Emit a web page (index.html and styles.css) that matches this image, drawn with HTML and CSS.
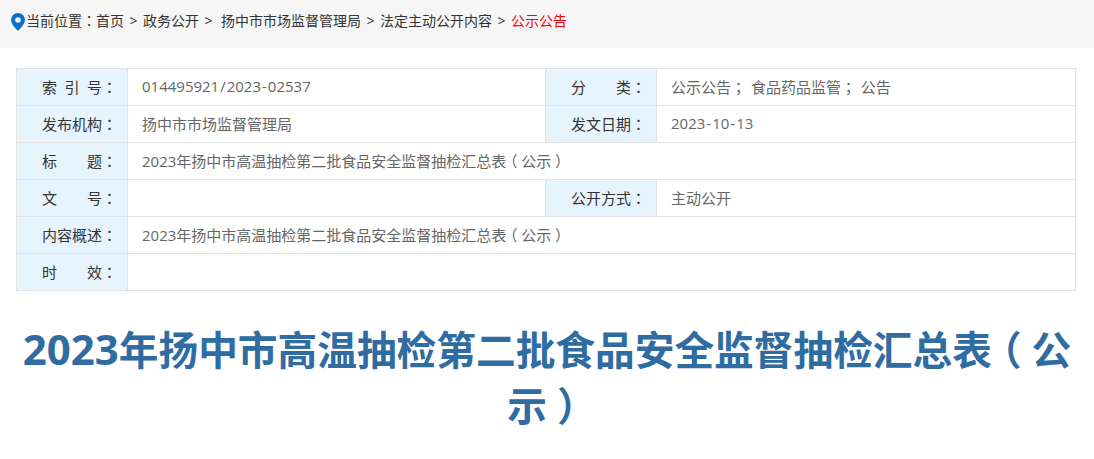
FILE: index.html
```html
<!DOCTYPE html>
<html>
    <head>
        <meta charset="utf-8">
        <link rel="stylesheet" href="styles.css">
    </head>
    <body>
        <div class="crumbs">
            <svg class="pin" width="14" height="18" viewBox="0 0 14 18"><path fill="#0b72c9" fill-rule="evenodd" d="M7 0a7 7 0 0 1 7 7c0 3.600-4 7.800-7 11C4 14.800 0 10.600 0 7a7 7 0 0 1 7-7zm0 4.200a2.800 2.800 0 1 0 0 5.600 2.800 2.800 0 0 0 0-5.600z"/></svg>
            <span>当前位置<span class="pt">：</span>首页</span>
            <span class="sep">&gt;</span>
            <span>政务公开</span>
            <span class="sep wide">&gt;</span>
            <span>扬中市市场监督管理局</span>
            <span class="sep">&gt;</span>
            <span>法定主动公开内容</span>
            <span class="sep">&gt;</span>
            <span class="current">公示公告</span>
        </div>
        <table class="info">
            <tr>
                <th>索&ensp;引&ensp;号<span class="pt">：</span></th>
                <td>014495921<span class="mark">/</span>2023<span class="mark">-</span>02537</td>
                <th>分&emsp;&emsp;类<span class="pt">：</span></th>
                <td>公示公告<span class="pt">；</span> 食品药品监管<span class="pt">；</span> 公告</td>
            </tr>
            <tr>
                <th>发布机构<span class="pt">：</span></th>
                <td>扬中市市场监督管理局</td>
                <th>发文日期<span class="pt">：</span></th>
                <td>2023<span class="mark">-</span>10<span class="mark">-</span>13</td>
            </tr>
            <tr>
                <th>标&emsp;&emsp;题<span class="pt">：</span></th>
                <td colspan="3">2023年扬中市高温抽检第二批食品安全监督抽检汇总表<span class="par">（</span>公示<span class="par">）</span></td>
            </tr>
            <tr>
                <th>文&emsp;&emsp;号<span class="pt">：</span></th>
                <td></td>
                <th>公开方式<span class="pt">：</span></th>
                <td>主动公开</td>
            </tr>
            <tr>
                <th>内容概述<span class="pt">：</span></th>
                <td colspan="3">2023年扬中市高温抽检第二批食品安全监督抽检汇总表<span class="par">（</span>公示<span class="par">）</span></td>
            </tr>
            <tr>
                <th>时&emsp;&emsp;效<span class="pt">：</span></th>
                <td colspan="3"></td>
            </tr>
        </table>
        <h1 class="title"><span class="num">2023</span>年扬中市高温抽检第二批食品安全监督抽检汇总表<span class="par">（</span><span>公</span><span>示</span><span class="par">）</span></h1>
    </body>
</html>
```

FILE: styles.css
```css
body{
    margin: 0;
    font-family: 'Open Sans', 'Noto Sans CJK SC', sans-serif;
    background-color: #fff;
    color: #333;
}

/* centred full-width punctuation */
.pt{
    font-family: 'Noto Sans CJK TC', sans-serif;
}

.par{
    font-feature-settings: "halt";
    margin: 0 0.25em;
}

.mark{
    margin: 0 1px;
}

.crumbs{
    height: 48px;
    box-sizing: border-box;
    padding: 0 0 8px 11px;
    background-color: #F6F6F6;
    display: flex;
    align-items: center;
    font-size: 14px;
    color: #333;
}

.crumbs .pin{
    margin: 4px 1px 0 0;
}

.crumbs .sep{
    margin: 0 5.5px;
}

.crumbs .sep.wide{
    margin: 0 8.5px 0 5.5px;
}

.crumbs .current{
    color: #f00;
}

.info{
    width: 1060px;
    margin: 20px 0 0 16px;
    border-collapse: collapse;
    table-layout: fixed;
    font-size: 15px;
    word-spacing: 1px;
}

.info th, .info td{
    height: 37px;
    padding: 0 0 2px;
    border: 1px solid #E2E2E2;
    box-sizing: border-box;
}

.info th{
    width: 111px;
    padding-left: 25px;
    background-color: #E8F4FD;
    font-weight: normal;
    text-align: left;
    color: #333;
    white-space: nowrap;
}

.info td{
    padding-left: 14px;
    color: #666;
}

.info td:nth-child(2){
    width: 418px;
}

.title{
    margin: 30px 16px 0;
    font-size: 39.7px;
    line-height: 56px;
    font-weight: bold;
    text-align: center;
    color: #2F6CA2;
}

.title .num{
    font-size: 42px;
}
```
